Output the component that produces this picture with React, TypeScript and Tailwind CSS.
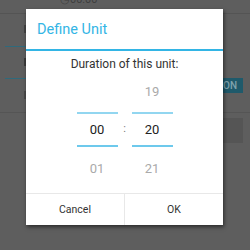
import React from "react";

export default function App() {
  const font = { fontFamily: "Roboto, 'Noto Sans', sans-serif" };
  return (
    <div className="relative w-[250px] h-[250px] overflow-hidden bg-[#5e5e5e]" style={font}>
      {/* background screen */}
      <div className="flex flex-col">
        <div className="h-[13px] relative">
          <div className="absolute left-[60px] top-[-6px] text-[11px] text-[#3e3e3e] leading-[12px]">◷00:00</div>
        </div>
        <div className="h-px bg-[#545454]" />
        <div className="flex">
          <div className="flex flex-col w-[26px]">
            <div className="h-[32px] relative">
              <div className="absolute left-[24px] top-[11px] w-[2px] h-[8px] bg-[#444]" />
            </div>
            <div className="ml-[5px] h-px bg-[#2f6a7c]" />
            <div className="h-[31px] relative">
              <div className="absolute left-[24px] top-[11px] w-[2px] h-[8px] bg-[#3c3c3c]" />
            </div>
            <div className="ml-[5px] h-px bg-[#2f6a7c]" />
            <div className="h-[33px] relative">
              <div className="absolute left-[24px] top-[12px] w-[2px] h-[8px] bg-[#4a4a4a]" />
            </div>
          </div>
          <div className="flex-1 flex flex-col items-end pr-[7px]">
            <div className="h-[64px]" />
            <div className="w-[38px] h-[15px] bg-[#1f5a6b] flex items-center justify-end pr-[6px] text-[10px] text-[#7fa3ad] font-medium">
              ON
            </div>
          </div>
        </div>
        <div className="h-px bg-[#555]" />
        <div className="flex justify-end pr-[7px] pt-[5px]">
          <div className="w-[20px] h-[25px] bg-[#555]" />
        </div>
      </div>

      {/* dialog */}
      <div className="absolute left-[26px] top-[9px] w-[197px] h-[216px] bg-white flex flex-col shadow-[1px_2px_4px_rgba(0,0,0,0.55)]">
        <div className="h-[40px] flex items-center pl-[11px] pt-[2px] text-[14.5px] text-[#33b5e5]">
          Define Unit
        </div>
        <div className="h-[2px] bg-[#33b5e5]" />
        <div className="mt-[5px] h-[16px] leading-[16px] text-[12px] text-[#333] text-center">
          Duration of this unit:
        </div>
        <div className="flex justify-center items-stretch">
          <div className="w-[41px] flex flex-col">
            <div className="h-[40px]" />
            <div className="h-[2px] bg-[#92d6f0]" />
            <div className="h-[31px] flex items-center justify-center text-[13px] text-[#222]">00</div>
            <div className="h-[2px] bg-[#6dc9ec]" />
            <div className="h-[44px] flex items-center justify-center text-[13px] text-[#aaa]">01</div>
          </div>
          <div className="w-[14px] flex flex-col">
            <div className="h-[42px]" />
            <div className="h-[31px] flex items-center justify-center text-[11px] text-[#777]">:</div>
          </div>
          <div className="w-[41px] flex flex-col">
            <div className="h-[40px] flex items-center justify-center text-[13px] text-[#aaa]">19</div>
            <div className="h-[2px] bg-[#92d6f0]" />
            <div className="h-[31px] flex items-center justify-center text-[13px] text-[#222]">20</div>
            <div className="h-[2px] bg-[#6dc9ec]" />
            <div className="h-[44px] flex items-center justify-center text-[13px] text-[#aaa]">21</div>
          </div>
        </div>
        <div className="mt-auto h-px bg-[#e8e8e8]" />
        <div className="h-[31px] flex text-[10.5px] text-[#333]">
          <div className="flex-1 flex items-center justify-center">Cancel</div>
          <div className="w-px bg-[#e8e8e8]" />
          <div className="flex-1 flex items-center justify-center">OK</div>
        </div>
      </div>
    </div>
  );
}
